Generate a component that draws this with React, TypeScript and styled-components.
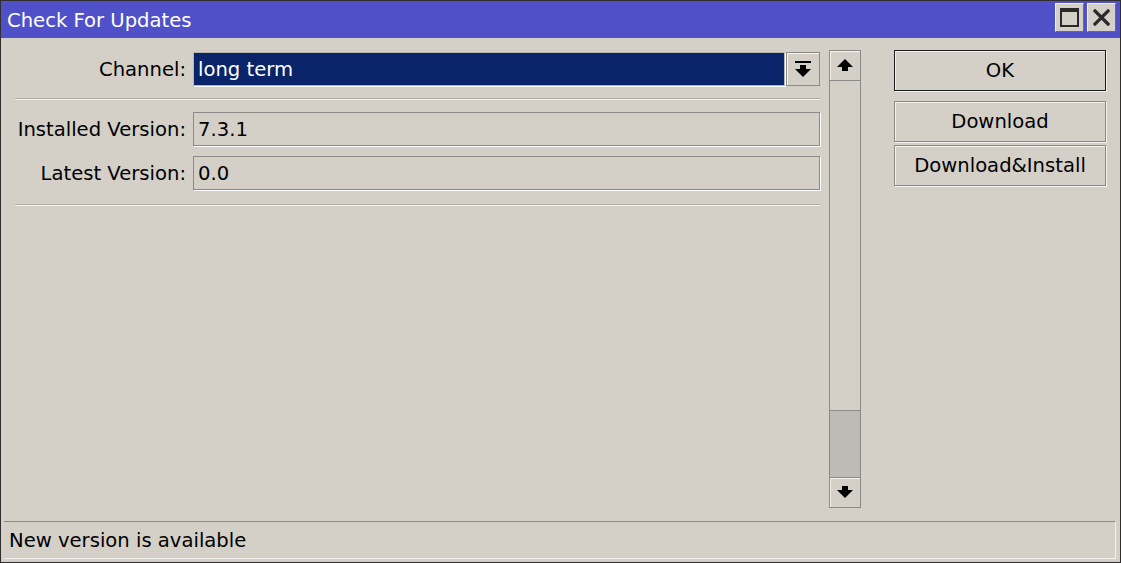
import React from "react";
import styled, { createGlobalStyle } from "styled-components";

const Global = createGlobalStyle`
  html, body { margin: 0; padding: 0; background: #d4d0c8; }
  body { font-family: "DejaVu Sans", Verdana, sans-serif; }
`;

const Window = styled.div`
  width: 1121px;
  height: 563px;
  box-sizing: border-box;
  border: 1px solid #2e2e2e;
  background: #d4d0c8;
  display: flex;
  flex-direction: column;
  font-family: "DejaVu Sans", Verdana, sans-serif;
  font-size: 19.6px;
  color: #000;
`;

const TitleBar = styled.div`
  height: 37px;
  background: #5050c8;
  display: flex;
  align-items: center;
  padding: 0 4px 0 6px;
  flex-shrink: 0;
`;

const Title = styled.div`
  color: #fff;
  flex: 1;
  line-height: 37px;
  padding-top: 1px;
`;

const TitleButtons = styled.div`
  display: flex;
  gap: 3px;
  margin-top: -4px;
`;

const TitleButton = styled.div`
  width: 29px;
  height: 29px;
  box-sizing: border-box;
  background: #d4d0c8;
  border: 1px solid #f4f2ee;
  border-right-color: #6a6a6a;
  border-bottom-color: #6a6a6a;
  display: flex;
  align-items: center;
  justify-content: center;
`;

const Content = styled.div`
  flex: 1;
  display: flex;
  padding: 12px 0 0 14px;
  min-height: 0;
`;

const Form = styled.div`
  width: 805px;
  display: flex;
  flex-direction: column;
  padding-top: 2px;
`;

const Row = styled.div<{ $top?: number }>`
  display: flex;
  align-items: center;
  height: 34px;
  margin-top: ${(p) => p.$top ?? 0}px;
`;

const Label = styled.div`
  width: 178px;
  text-align: right;
  padding-right: 7px;
  box-sizing: border-box;
  white-space: nowrap;
`;

const Field = styled.div`
  flex: 1;
  height: 34px;
  box-sizing: border-box;
  border: 1px solid #8c8a86;
  box-shadow: 1px 1px 0 #ffffff;
  padding-left: 4px;
  display: flex;
  align-items: center;
`;

const SelectBox = styled(Field)`
  background: #0a246a;
  color: #fff;
  border-color: #b8b6b2;
  outline: 1px solid #0a246a;
  outline-offset: -3px;
`;

const DropButton = styled.div`
  width: 34px;
  height: 34px;
  box-sizing: border-box;
  margin-left: 1px;
  border: 1px solid #8c8a86;
  box-shadow: inset 1px 1px 0 #f4f2ee;
  display: flex;
  align-items: center;
  justify-content: center;
`;

const Separator = styled.div<{ $top: number }>`
  height: 1px;
  background: #b0aca6;
  border-bottom: 1px solid #f4f2ee;
  margin-top: ${(p) => p.$top}px;
`;

const ScrollBar = styled.div`
  width: 32px;
  height: 458px;
  margin-left: 9px;
  box-sizing: border-box;
  border-left: 1px solid #8c8a86;
  border-right: 1px solid #8c8a86;
  display: flex;
  flex-direction: column;
`;

const ScrollButton = styled.div`
  height: 31px;
  box-sizing: border-box;
  border-top: 1px solid #8c8a86;
  border-bottom: 1px solid #8c8a86;
  box-shadow: inset 1px 1px 0 #f4f2ee;
  display: flex;
  align-items: center;
  justify-content: center;
  flex-shrink: 0;
`;

const Track = styled.div`
  flex: 1;
  display: flex;
  flex-direction: column;
  justify-content: flex-end;
`;

const Thumb = styled.div`
  height: 66px;
  background: #bebab4;
  border-top: 1px solid #8c8a86;
`;

const Buttons = styled.div`
  width: 212px;
  margin-left: 33px;
  display: flex;
  flex-direction: column;
`;

const Button = styled.div<{ $top: number; $focused?: boolean }>`
  height: 41px;
  box-sizing: border-box;
  margin-top: ${(p) => p.$top}px;
  border: 1px solid ${(p) => (p.$focused ? "#1a1a1a" : "#8c8a86")};
  box-shadow: inset 1px 1px 0 #f4f2ee, 1px 1px 0 #f4f2ee;
  display: flex;
  align-items: center;
  justify-content: center;
  white-space: nowrap;
`;

const StatusBar = styled.div`
  height: 38px;
  margin: 0 4px 3px 3px;
  box-sizing: border-box;
  border-top: 1px solid #8c8a86;
  border-bottom: 1px solid #f4f2ee;
  border-right: 1px solid #f4f2ee;
  padding-left: 5px;
  display: flex;
  align-items: center;
  flex-shrink: 0;
`;

const MaximizeIcon = () => (
  <svg width="19" height="19" viewBox="0 0 19 19">
    <rect x="1" y="1" width="17" height="17" fill="none" stroke="#2a2a2a" strokeWidth="2" />
    <rect x="1" y="1" width="17" height="3" fill="#2a2a2a" />
  </svg>
);

const CloseIcon = () => (
  <svg width="17" height="17" viewBox="0 0 17 17">
    <path d="M2 2 L15 15 M15 2 L2 15" stroke="#2a2a2a" strokeWidth="3.2" strokeLinecap="square" />
  </svg>
);

const DropIcon = () => (
  <svg width="18" height="18" viewBox="0 0 18 18">
    <rect x="1" y="1" width="16" height="2" fill="#000" />
    <path d="M6 5 H12 V9 H17 L9 17 L1 9 H6 Z" fill="#000" />
  </svg>
);

const ArrowUp = () => (
  <svg width="18" height="13" viewBox="0 0 18 13">
    <path d="M9 0 L17 8 H12 V12 H6 V8 H1 Z" fill="#000" />
  </svg>
);

const ArrowDown = () => (
  <svg width="18" height="13" viewBox="0 0 18 13">
    <path d="M6 0 H12 V4 H17 L9 12 L1 4 H6 Z" fill="#000" />
  </svg>
);

export default function App() {
  return (
    <>
      <Global />
      <Window>
        <TitleBar>
          <Title>Check For Updates</Title>
          <TitleButtons>
            <TitleButton>
              <MaximizeIcon />
            </TitleButton>
            <TitleButton>
              <CloseIcon />
            </TitleButton>
          </TitleButtons>
        </TitleBar>
        <Content>
          <Form>
            <Row>
              <Label>Channel:</Label>
              <SelectBox>long term</SelectBox>
              <DropButton>
                <DropIcon />
              </DropButton>
            </Row>
            <Separator $top={12} />
            <Row $top={12}>
              <Label>Installed Version:</Label>
              <Field>7.3.1</Field>
            </Row>
            <Row $top={10}>
              <Label>Latest Version:</Label>
              <Field>0.0</Field>
            </Row>
            <Separator $top={14} />
          </Form>
          <ScrollBar>
            <ScrollButton>
              <ArrowUp />
            </ScrollButton>
            <Track>
              <Thumb />
            </Track>
            <ScrollButton>
              <ArrowDown />
            </ScrollButton>
          </ScrollBar>
          <Buttons>
            <Button $top={0} $focused>OK</Button>
            <Button $top={10}>Download</Button>
            <Button $top={3}>Download&amp;Install</Button>
          </Buttons>
        </Content>
        <StatusBar>New version is available</StatusBar>
      </Window>
    </>
  );
}
